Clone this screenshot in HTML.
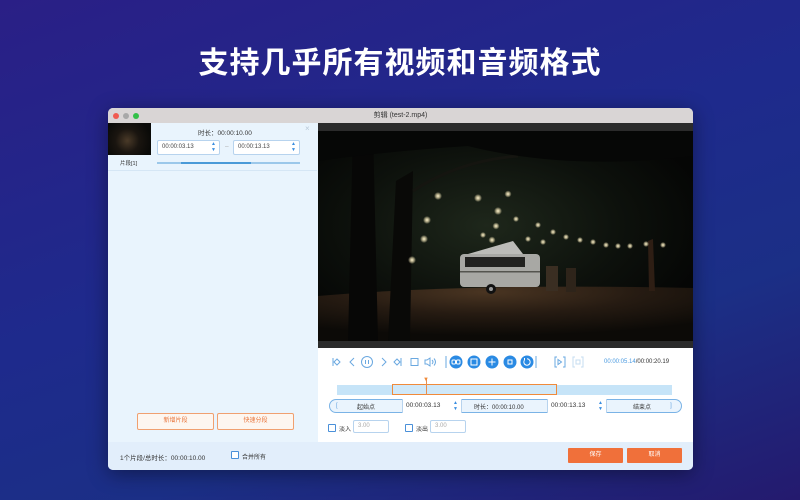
<!DOCTYPE html>
<html><head><meta charset="utf-8"><style>
*{margin:0;padding:0;box-sizing:border-box}
body{width:800px;height:500px;overflow:hidden;font-family:"Liberation Sans","Noto Sans CJK SC",sans-serif;background:linear-gradient(160deg,#2a1f86 0%,#1e2a8c 45%,#1b2f86 70%,#241a6e 100%);position:relative}
.abs{position:absolute}
h1{position:absolute;top:38px;left:0;width:800px;text-align:center;color:#fff;font-size:30px;font-weight:bold;letter-spacing:1px;font-family:"Noto Sans CJK SC",sans-serif}
.win{left:108px;top:108px;width:585px;height:362px;background:#e9f4fd;border-radius:5px;overflow:hidden;box-shadow:0 4px 20px rgba(0,0,0,.4)}
.tb{left:0;top:0;width:585px;height:15px;background:#d9d5d5;font-size:7px;text-align:center;line-height:15px;color:#333}
.dot{width:6px;height:6px;border-radius:50%;top:4.5px}
.t{font-size:6.5px;color:#333;white-space:nowrap}
.inp{background:#fff;border:1px solid #b7d3ee;border-radius:2px;height:15px;font-size:6px;line-height:13px;padding-left:4px;color:#444}
.btn{border:1px solid #f0a070;border-radius:2px;background:#fdf6f0;color:#e8743a;font-size:6px;text-align:center;line-height:15px}
.cb{width:8px;height:8px;border:1px solid #4a90d9;background:#fff;border-radius:1px}
</style></head><body>
<h1>支持几乎所有视频和音频格式</h1>
<div class="abs win">
 <div class="abs tb">剪辑 (test-2.mp4)</div>
 <div class="abs dot" style="left:5px;background:#f05b50"></div>
 <div class="abs dot" style="left:15px;background:#a8a8a8"></div>
 <div class="abs dot" style="left:25px;background:#33c048"></div>
 <div class="abs" style="left:0;top:15px;width:43px;height:32px;background:radial-gradient(circle at 45% 55%,#4a3a28 0,#1a1510 40%,#0a0a08 80%)"></div>
 <div class="abs t" style="left:12px;top:51px;font-size:5.5px">片段[1]</div>
 <div class="abs" style="left:0;top:62px;width:209px;height:1px;background:#d5e6f5"></div>
 <div class="abs t" style="left:90px;top:19px">时长：00:00:10.00</div>
 <div class="abs" style="left:197px;top:16px;color:#b8c8d8;font-size:8px">×</div>
 <div class="abs inp" style="left:49px;top:32px;width:63px">00:00:03.13<span style="position:absolute;right:3px;top:0;color:#3a8ee0;font-size:5px;line-height:6px">▲<br>▼</span></div>
 <div class="abs t" style="left:117px;top:35px;color:#aaa">–</div>
 <div class="abs inp" style="left:125px;top:32px;width:67px">00:00:13.13<span style="position:absolute;right:3px;top:0;color:#3a8ee0;font-size:5px;line-height:6px">▲<br>▼</span></div>
 <div class="abs" style="left:49px;top:54px;width:143px;height:2px;background:#9cc8ea"></div>
 <div class="abs" style="left:73px;top:54px;width:70px;height:2px;background:#4a9ad8"></div>
 <div class="abs btn" style="left:29px;top:305px;width:77px;height:17px">新增片段</div>
 <div class="abs btn" style="left:109px;top:305px;width:77px;height:17px">快速分段</div>
 <!-- video -->
 <div class="abs" style="left:210px;top:15px;width:375px;height:225px;background:#2b2b2b"></div>
 <svg class="abs" style="left:210px;top:23px" width="375" height="210" viewBox="0 0 375 210">
  <defs>
   <radialGradient id="fol" cx="0.45" cy="0.45" r="0.6"><stop offset="0" stop-color="#1e271b"/><stop offset="0.6" stop-color="#0d110c"/><stop offset="1" stop-color="#050605"/></radialGradient>
   <radialGradient id="gr" cx="0.45" cy="0.1" r="0.8"><stop offset="0" stop-color="#4a3522"/><stop offset="0.5" stop-color="#261b12"/><stop offset="1" stop-color="#0c0a07"/></radialGradient>
   <radialGradient id="glow"><stop offset="0" stop-color="#fff5d0" stop-opacity="1"/><stop offset="0.5" stop-color="#fff0c0" stop-opacity="0.6"/><stop offset="1" stop-color="#fff0c0" stop-opacity="0"/></radialGradient>
  </defs>
  <rect width="375" height="210" fill="url(#fol)"/>
  <path d="M0 165 Q150 152 375 157 L375 210 L0 210Z" fill="url(#gr)"/>
  <path d="M35 0 L55 0 L60 210 L30 210Z" fill="#070706"/>
  <path d="M78 50 L95 40 L92 210 L70 210Z" fill="#090907"/>
  <path d="M95 60 Q140 30 200 25" stroke="#151510" stroke-width="3" fill="none"/>
  <path d="M0 0 L375 0 L375 25 Q250 40 150 15 Q70 20 0 30Z" fill="#060706"/>
  <path d="M330 110 L335 108 L337 160 L331 160Z" fill="#2e1e14"/>
  <!-- van -->
  <path d="M150 123 L195 110 L205 123Z" fill="#bcbcb8"/>
  <rect x="142" y="123" width="80" height="33" rx="4" fill="#a8a8a4"/>
  <rect x="147" y="126" width="60" height="10" fill="#222220"/>
  <rect x="142" y="140" width="80" height="1.5" fill="#55554f"/>
  <circle cx="173" cy="158" r="5" fill="#111"/><circle cx="173" cy="158" r="2" fill="#999"/>
  <rect x="228" y="135" width="12" height="25" fill="#3a2e22"/><rect x="248" y="137" width="10" height="24" fill="#2e241a"/>
  <g fill="url(#glow)">
   <circle cx="120" cy="65" r="4"/><circle cx="160" cy="67" r="4"/><circle cx="109" cy="89" r="4"/><circle cx="106" cy="108" r="4"/><circle cx="94" cy="129" r="4"/><circle cx="190" cy="63" r="3.5"/><circle cx="180" cy="80" r="4"/><circle cx="178" cy="95" r="3.5"/><circle cx="174" cy="109" r="3.5"/><circle cx="198" cy="88" r="3"/><circle cx="220" cy="94" r="3"/><circle cx="235" cy="101" r="3"/><circle cx="262" cy="109" r="3"/><circle cx="275" cy="111" r="3"/><circle cx="288" cy="114" r="3"/><circle cx="300" cy="115" r="3"/><circle cx="312" cy="115" r="3"/><circle cx="328" cy="113" r="3"/><circle cx="345" cy="114" r="3"/><circle cx="248" cy="106" r="3"/><circle cx="165" cy="104" r="3"/><circle cx="210" cy="108" r="3"/><circle cx="225" cy="111" r="3"/>
  </g>
 </svg>
 <!-- controls -->
 <div class="abs" style="left:210px;top:240px;width:375px;height:94px;background:#fff"></div>
 <svg class="abs" style="left:210px;top:242px" width="375" height="25" viewBox="0 0 375 25" fill="none" stroke="#6aa8e0" stroke-width="1">
  <g transform="translate(0,12)">
   <path d="M15 -4 V4 M16 0 L19 -3 L22 0 L19 3 Z"/>
   <path d="M36 -4 L32 0 L36 4"/>
   <circle cx="49" cy="0" r="5.5"/><path d="M47.5 -2 V2 M50.5 -2 V2"/>
   <path d="M64 -4 L68 0 L64 4"/>
   <path d="M76 0 L79 -3 L82 0 L79 3 Z M83 -4 V4"/>
   <rect x="93" y="-3.5" width="7" height="7"/>
   <path d="M107 -2 H109 L112 -4 V4 L109 2 H107 Z M114 -2 Q116 0 114 2 M116 -3.5 Q119 0 116 3.5"/>
   <path d="M128 -6 V6"/>
   <g fill="#2a8ae3" stroke="none"><circle cx="138" cy="0" r="6.5"/><circle cx="156" cy="0" r="6.5"/><circle cx="174" cy="0" r="6.5"/><circle cx="192" cy="0" r="6.5"/><circle cx="209" cy="0" r="6.5"/></g>
   <g stroke="#fff"><rect x="134" y="-2" width="3.5" height="4" rx="1"/><rect x="138.5" y="-2" width="3.5" height="4" rx="1"/><rect x="153" y="-3" width="6" height="6"/><path d="M174 -3.5 V3.5 M170.5 0 H177.5"/><rect x="190" y="-2" width="4" height="4"/><path d="M206.5 -2 A3.2 3.2 0 1 0 209 -3.2 M206.5 -2 V-4"/></g>
   <path d="M218 -6 V6"/>
   <path d="M239 -5 H237 V5 H239 M245 -5 H247 V5 H245 M240 -2.5 L243.5 0 L240 2.5Z"/>
   <path d="M257 -5 H255 V5 H257 M263 -5 H265 V5 H263 M258 -2 H262 V2 H258Z" stroke="#c5dcf0"/>
  </g>
 </svg>
 <div class="abs t" style="left:496px;top:251px;font-size:6px"><span style="color:#4a9ae0">00:00:05.14</span>/00:00:20.19</div>
 <div class="abs" style="left:229px;top:277px;width:335px;height:10px;background:#c6e4f8"></div>
 <div class="abs" style="left:284px;top:276px;width:165px;height:11px;border:1.5px solid #f08a3a;background:#cfe8f9"></div>
 <div class="abs" style="left:318px;top:270px;width:1px;height:17px;background:#e89050"></div>
 <div class="abs" style="left:315px;top:269px;color:#f08a3a;font-size:6px">▼</div>
 <div class="abs" style="left:221px;top:291px;width:353px;height:14px;border:1px solid #7ab3e6;border-radius:7px;background:#eaf4fd"></div>
 <div class="abs t" style="left:228px;top:294px;color:#6aa8e0">[</div>
 <div class="abs t" style="left:249px;top:294px;font-size:6px">起始点</div>
 <div class="abs" style="left:294px;top:291px;width:60px;height:14px;background:#fff;border-left:1px solid #b7d3ee;border-right:1px solid #b7d3ee;font-size:6.5px;line-height:14px;padding-left:3px;color:#333">00:00:03.13<span style="position:absolute;right:3px;top:1px;color:#3a8ee0;font-size:5px;line-height:6px">▲<br>▼</span></div>
 <div class="abs t" style="left:366px;top:294px;font-size:6px">时长：00:00:10.00</div>
 <div class="abs" style="left:439px;top:291px;width:60px;height:14px;background:#fff;border-left:1px solid #b7d3ee;border-right:1px solid #b7d3ee;font-size:6.5px;line-height:14px;padding-left:3px;color:#333">00:00:13.13<span style="position:absolute;right:3px;top:1px;color:#3a8ee0;font-size:5px;line-height:6px">▲<br>▼</span></div>
 <div class="abs t" style="left:525px;top:294px;font-size:6px">结束点</div>
 <div class="abs t" style="left:562px;top:294px;color:#6aa8e0">]</div>
 <div class="abs cb" style="left:220px;top:316px"></div><div class="abs t" style="left:231px;top:316px;font-size:6px">淡入</div>
 <div class="abs inp" style="left:245px;top:312px;width:36px;height:13px;line-height:11px;color:#aaa">3.00</div>
 <div class="abs cb" style="left:297px;top:316px"></div><div class="abs t" style="left:308px;top:316px;font-size:6px">淡出</div>
 <div class="abs inp" style="left:322px;top:312px;width:36px;height:13px;line-height:11px;color:#aaa">3.00</div>
 <div class="abs" style="left:0;top:334px;width:585px;height:28px;background:#e2eefb"></div>
 <div class="abs t" style="left:12px;top:344px;font-size:6.5px">1个片段/总时长：00:00:10.00</div>
 <div class="abs cb" style="left:123px;top:343px"></div><div class="abs t" style="left:134px;top:344px;font-size:6px">合并所有</div>
 <div class="abs" style="left:460px;top:340px;width:55px;height:15px;background:#f0703a;color:#fff;font-size:6px;text-align:center;line-height:15px;border-radius:1px">保存</div>
 <div class="abs" style="left:519px;top:340px;width:55px;height:15px;background:#f0703a;color:#fff;font-size:6px;text-align:center;line-height:15px;border-radius:1px">取消</div>
</div>
</body></html>
